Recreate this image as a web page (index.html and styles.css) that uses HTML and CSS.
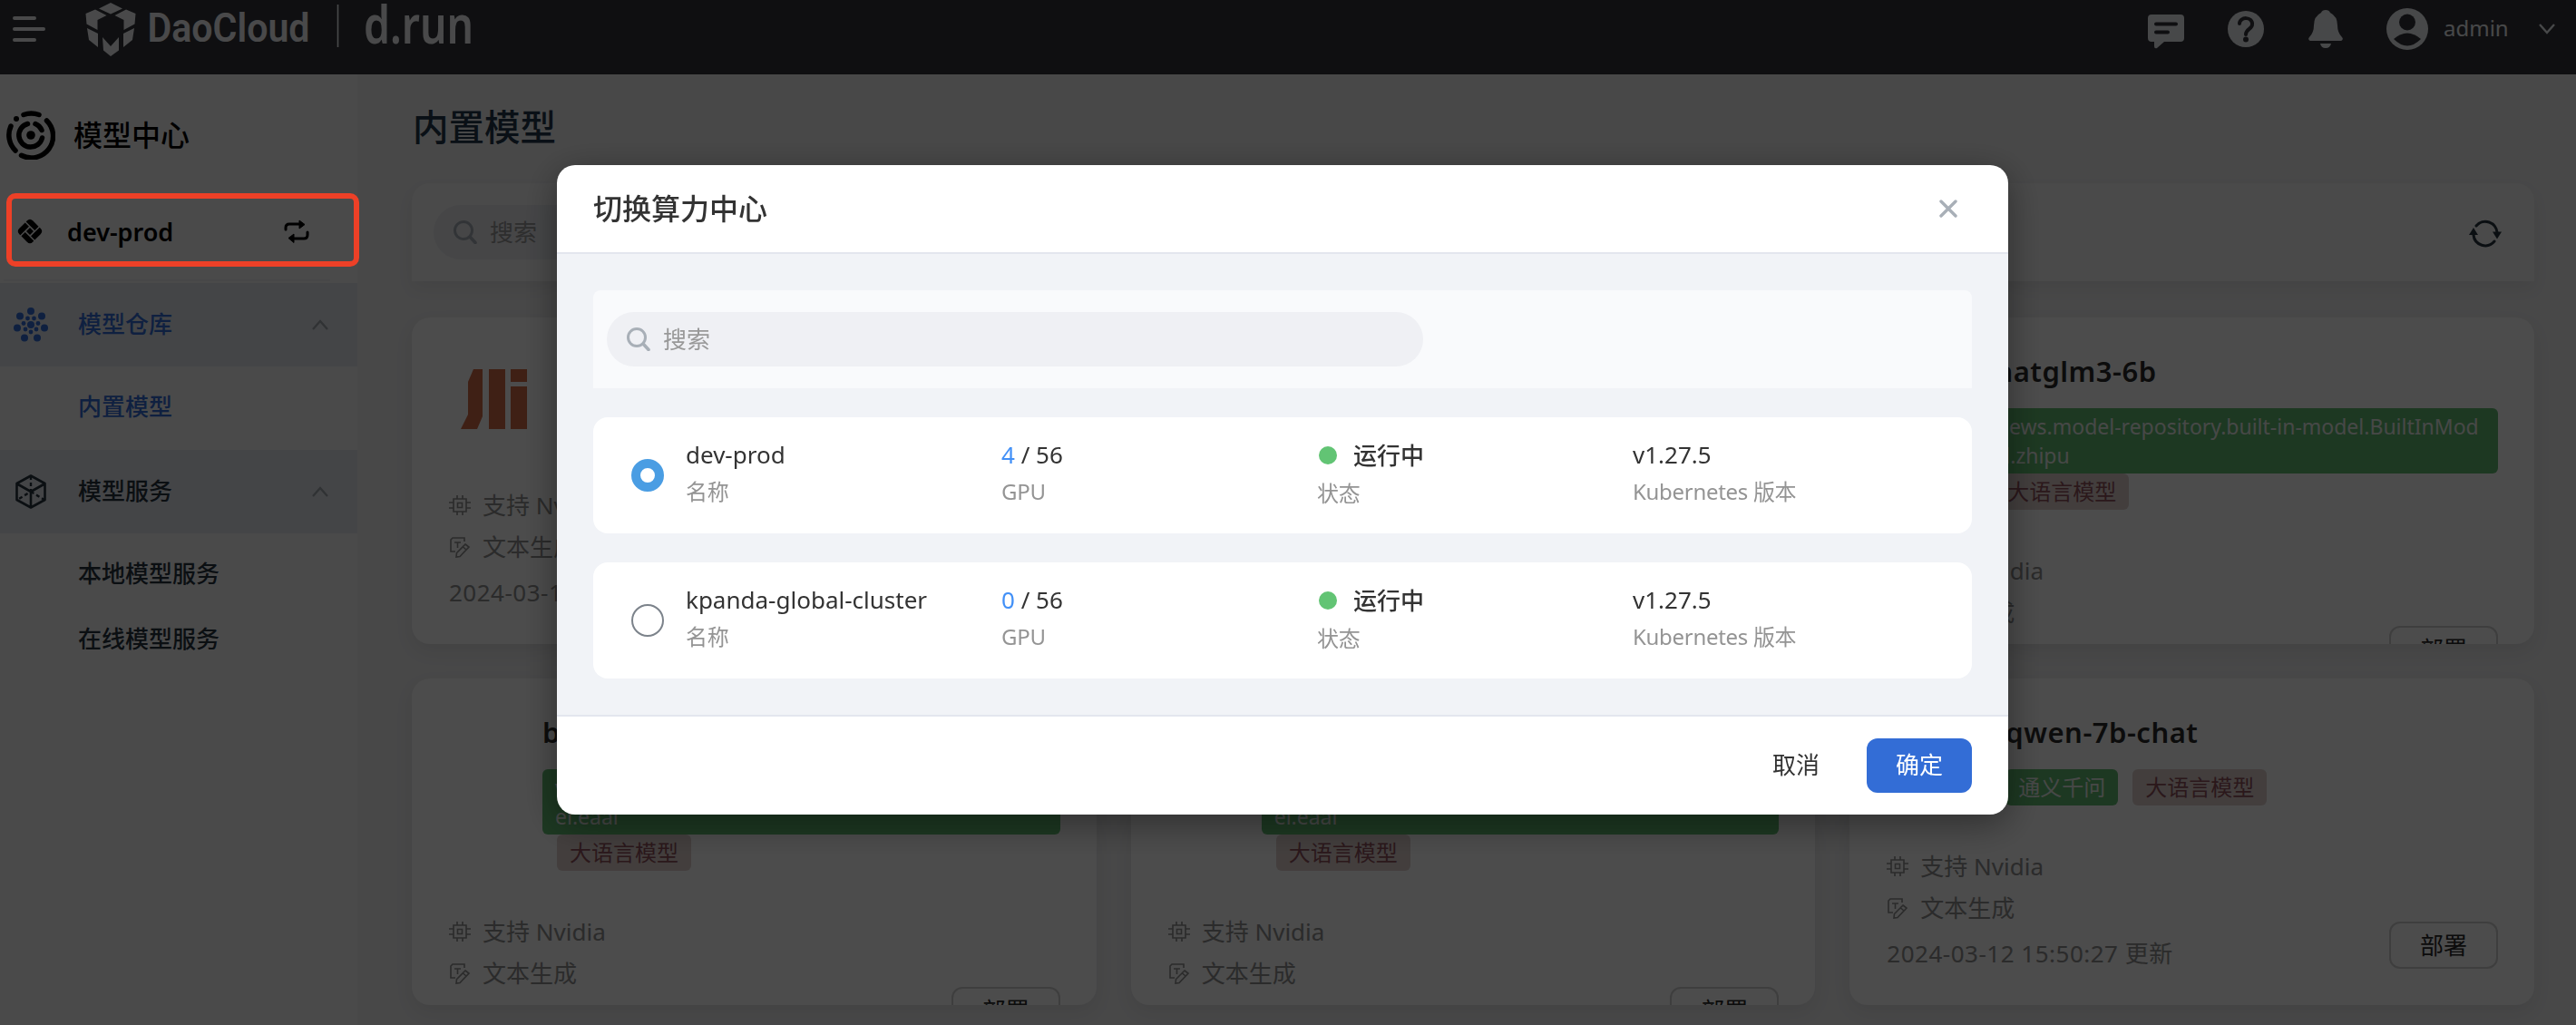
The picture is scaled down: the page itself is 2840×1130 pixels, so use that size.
FILE: index.html
```
<!DOCTYPE html>
<html lang="zh-CN">
<head>
<meta charset="utf-8">
<title>内置模型</title>
<link rel="stylesheet" href="styles.css">
</head>
<body>
<svg width="0" height="0" class="defs" aria-hidden="true">
  <defs>
    <symbol id="i-search" viewBox="0 0 26 26"><circle cx="11" cy="11" r="9.500" fill="none" stroke="currentColor" stroke-width="3"/><path d="M18 18l6 6.500" stroke="currentColor" stroke-width="3.600" stroke-linecap="round"/></symbol>
    <symbol id="i-up" viewBox="0 0 20 12"><path d="M2 11L10 2l8 9" fill="none" stroke="currentColor" stroke-width="2.400"/></symbol>
    <symbol id="i-chip" viewBox="0 0 24 24"><path d="M5 5h14v14H5zM9.500 9.500h5v5h-5zM9 1v4M15 1v4M9 19v4M15 19v4M0 9h5M0 15h5M19 9h5M19 15h5" fill="none" stroke="currentColor" stroke-width="1.600"/></symbol>
    <symbol id="i-text" viewBox="0 0 24 24"><path d="M17 6V2H4L2 4v13h5M6 7h7M9.500 7v6" fill="none" stroke="currentColor" stroke-width="1.600"/><path d="M18 9l4 3-10 10.500-4 .5.500-4.500zM15.500 12l3.500 3" fill="none" stroke="currentColor" stroke-width="1.600"/></symbol>
  </defs>
</svg>

<header class="topbar">
  <svg class="burger" viewBox="0 0 36 28"><path d="M2 2h22M2 14h32M2 26h22" stroke="currentColor" stroke-width="4" stroke-linecap="round"/></svg>
  <svg class="brand" viewBox="0 0 430 64">
    <g fill="currentColor">
      <path d="M36 3L49 9.500 36 15.500 23 9.500z"/>
      <path d="M19 10.500L31.500 17 21.500 22v11L9.500 26.500 8.500 15z"/>
      <path d="M53 10.500L40.500 17 50.500 22v11L62.500 26.500 63.500 15z"/>
      <path d="M10 31l12 6v15L12 44z"/>
      <path d="M62 31l-12 6v15l10-8z"/>
      <path d="M27 41l9 10 9-10v14.500l-9 6.500-8-6.500z"/>
    </g>
    <text class="brand-name" x="76.500" y="45.500" textLength="179" lengthAdjust="spacingAndGlyphs">DaoCloud</text>
    <path d="M286.500 5v47" stroke="currentColor" stroke-width="1.600"/>
    <text class="brand-product" x="315" y="48" textLength="121" lengthAdjust="spacingAndGlyphs">d.run</text>
  </svg>
  <div class="tools">
    <svg class="t-msg" viewBox="0 0 40 38"><path d="M4 0h32a4 4 0 0 1 4 4v22a4 4 0 0 1-4 4H18l-8 7q-3 1-3-2v-5H4a4 4 0 0 1-4-4V4a4 4 0 0 1 4-4z" fill="currentColor"/><path class="cut" d="M9 10.500h22M9 19.500h13"/></svg>
    <svg class="t-help" viewBox="0 0 40 40"><circle cx="20" cy="20" r="20" fill="currentColor"/><path class="cut" d="M13 14c0-8 15-8 14 1 0 5-7 5-7 11"/><circle class="cut-fill" cx="20" cy="31.500" r="3"/></svg>
    <svg class="t-bell" viewBox="0 0 38 42"><path d="M19 0q4 0 5 3 8 4 8 14 0 8 5 13c2 2 0 4-1 4H2c-1 0-3-2-1-4q5-5 5-13Q6 7 14 3q1-3 5-3zM13 37h12q-1 5-6 5t-6-5z" fill="currentColor"/></svg>
    <svg class="t-user" viewBox="0 0 46 46"><circle cx="23" cy="23" r="23" fill="currentColor"/><circle class="cut-fill" cx="23" cy="15.500" r="9"/><path class="cut-fill" d="M8 34q15-13 30 0-15 15-30 0z"/></svg>
    <span class="user">admin</span>
    <svg class="t-down" viewBox="0 0 20 12"><path d="M2 1l8 9 8-9" fill="none" stroke="currentColor" stroke-width="2.400"/></svg>
  </div>
</header>

<div class="layout">
  <aside class="sidebar">
    <div class="product">
      <svg viewBox="0 0 54 54"><g fill="none" stroke="currentColor" stroke-width="5.500" stroke-linecap="round"><path d="M19 4.500a24 24 0 0 1 17 0M44.500 11a24 24 0 0 1-28 38.300M10 44a24 24 0 0 1-5-27"/><path d="M23.500 14.500a13 13 0 1 0 16 15.500M32 14.500a13 13 0 0 1 7 7"/></g><circle cx="27" cy="27" r="4.800" fill="currentColor"/><circle cx="11" cy="9" r="3" fill="currentColor"/></svg>
      <span>模型中心</span>
    </div>
    <div class="cluster">
      <svg class="cluster-icon" viewBox="0 0 28 28"><g fill="currentColor" transform="rotate(-45 14 14)"><path d="M8 3.500h9v6H3.500V8q0-4.500 4.500-4.500zM18.500 3.500H20q4.500 0 4.500 4.500v9h-6zM24.500 18.500V20q0 4.500-4.500 4.500h-9v-6zM3.500 11h6v13.500H8q-4.500 0-4.500-4.500z"/><path d="M11.200 11.200h5.600v5.600h-5.600z"/></g></svg>
      <span class="cluster-name">dev-prod</span>
      <svg class="cluster-swap" viewBox="0 0 28 26"><path d="M2 11V9q0-4 4-4h13M26 14v3q0 4-4 4H9" fill="none" stroke="currentColor" stroke-width="3" stroke-linecap="round"/><path d="M17 1l6 4.500-6 4.500zM11 16l-6 4.500 6 5z" fill="currentColor" stroke="currentColor" stroke-linejoin="round"/></svg>
    </div>
    <nav>
      <div class="group active">
        <svg class="group-icon" viewBox="0 0 38 38"><g fill="currentColor"><circle cx="19" cy="19" r="4"/><circle cx="19" cy="4" r="4"/><circle cx="31" cy="9.500" r="4"/><circle cx="34" cy="22.500" r="4"/><circle cx="26" cy="33.500" r="4"/><circle cx="12" cy="33.500" r="4"/><circle cx="4" cy="22.500" r="4"/><circle cx="7" cy="9.500" r="4"/><circle cx="15.500" cy="12" r="2.400"/><circle cx="22.500" cy="12" r="2.400"/><circle cx="27" cy="17.500" r="2.400"/><circle cx="25" cy="24" r="2.400"/><circle cx="19" cy="27" r="2.400"/><circle cx="13" cy="24" r="2.400"/><circle cx="11" cy="17.500" r="2.400"/></g></svg>
        <span>模型仓库</span><svg class="caret"><use href="#i-up"/></svg>
      </div>
      <a class="item first active">内置模型</a>
      <div class="group">
        <svg class="group-icon" viewBox="0 0 38 38"><path d="M19 1.500L34.500 10v18L19 36.500 3.500 28V10zM4 10.500L19 19l15-8.500M19 19v17" fill="none" stroke="currentColor" stroke-width="2.600" stroke-linejoin="round"/><path d="M19 2v17L4 28M19 19l15 9" fill="none" stroke="currentColor" stroke-width="2.400" stroke-dasharray="4 3"/></svg>
        <span>模型服务</span><svg class="caret"><use href="#i-up"/></svg>
      </div>
      <a class="item local">本地模型服务</a>
      <a class="item">在线模型服务</a>
    </nav>
  </aside>

  <main class="main">
    <h1>内置模型</h1>
    <div class="toolbar">
      <div class="search page-search"><svg><use href="#i-search"/></svg><span>搜索</span></div>
      <svg class="refresh" viewBox="0 0 36 32"><path d="M8 8a13 13 0 0 1 23 8M28 25a13 13 0 0 1-23-7" fill="none" stroke="currentColor" stroke-width="3" stroke-linecap="round"/><path d="M26 14.500h10l-5 8zM0 18h10L5 10z" fill="currentColor"/></svg>
    </div>
    <div class="cards">
      <section class="card">
        <div class="card-head inset">
          <svg class="vendor" viewBox="0 0 74 66"><path fill="currentColor" d="M14 0h10v52l-6 14H0l8-16V14zM31 0h18v66H31zM55 0h18v14H55zM55 19h18v47H55z"/></svg>
          <div class="info"><h2>baichuan2-7b</h2><div class="tags"><span class="tag green">百川智能</span></div></div>
        </div>
        <div class="card-foot"><div class="meta"><p><svg><use href="#i-chip"/></svg><span>支持 Nvidia</span></p><p><svg><use href="#i-text"/></svg><span>文本生成</span></p><time>2024-03-12 15:50:27 更新</time></div><button>部署</button></div>
      </section>
      <section class="card">
        <div class="card-head"><div class="vendor"></div><div class="info"><h2>bge-base-zh</h2><div class="tags"><span class="tag green">智源</span></div></div></div>
        <div class="card-foot"><div class="meta"><p><svg><use href="#i-chip"/></svg><span>支持 Nvidia</span></p><p><svg><use href="#i-text"/></svg><span>文本生成</span></p><time>2024-03-12 15:50:27 更新</time></div><button>部署</button></div>
      </section>
      <section class="card">
        <div class="card-head"><div class="vendor"></div><div class="info"><h2>chatglm3-6b</h2><div class="tags"><span class="tag green wide">views.model-repository.built-in-model.BuiltInMod<br>el.zhipu</span><span class="tag brown">大语言模型</span></div></div></div>
        <div class="card-foot"><div class="meta"><p><svg><use href="#i-chip"/></svg><span>支持 Nvidia</span></p><p><svg><use href="#i-text"/></svg><span>文本生成</span></p><time>2024-03-12 15:50:27 更新</time></div><button>部署</button></div>
      </section>
      <section class="card">
        <div class="card-head"><div class="vendor"></div><div class="info"><h2>bge-large-zh</h2><div class="tags"><span class="tag green wide">views.model-repository.built-in-model.BuiltInMod<br>el.eaai</span><span class="tag brown">大语言模型</span></div></div></div>
        <div class="card-foot"><div class="meta"><p><svg><use href="#i-chip"/></svg><span>支持 Nvidia</span></p><p><svg><use href="#i-text"/></svg><span>文本生成</span></p><time>2024-03-12 15:50:27 更新</time></div><button>部署</button></div>
      </section>
      <section class="card">
        <div class="card-head"><div class="vendor"></div><div class="info"><h2>bge-m3</h2><div class="tags"><span class="tag green wide">views.model-repository.built-in-model.BuiltInMod<br>el.eaai</span><span class="tag brown">大语言模型</span></div></div></div>
        <div class="card-foot"><div class="meta"><p><svg><use href="#i-chip"/></svg><span>支持 Nvidia</span></p><p><svg><use href="#i-text"/></svg><span>文本生成</span></p><time>2024-03-12 15:50:27 更新</time></div><button>部署</button></div>
      </section>
      <section class="card">
        <div class="card-head inset"><div class="vendor"></div><div class="info"><h2>qwen-7b-chat</h2><div class="tags"><span class="tag green">通义千问</span><span class="tag brown">大语言模型</span></div></div></div>
        <div class="card-foot"><div class="meta"><p><svg><use href="#i-chip"/></svg><span>支持 Nvidia</span></p><p><svg><use href="#i-text"/></svg><span>文本生成</span></p><time>2024-03-12 15:50:27 更新</time></div><button>部署</button></div>
      </section>
    </div>
  </main>
</div>

<div class="mask">
  <div class="modal">
    <div class="modal-head">
      <h3>切换算力中心</h3>
      <svg class="close" viewBox="0 0 20 20"><path d="M2 2l16 16M18 2L2 18" stroke="currentColor" stroke-width="3.400" stroke-linecap="round"/></svg>
    </div>
    <div class="modal-body">
      <div class="modal-tools"><div class="search"><svg><use href="#i-search"/></svg><span>搜索</span></div></div>
      <div class="option">
        <i class="radio on"></i>
        <div class="cell"><b>dev-prod</b><small>名称</small></div>
        <div class="cell"><b><em>4</em> / 56</b><small>GPU</small></div>
        <div class="cell status"><b><i class="dot"></i>运行中</b><small>状态</small></div>
        <div class="cell"><b>v1.27.5</b><small>Kubernetes 版本</small></div>
      </div>
      <div class="option">
        <i class="radio"></i>
        <div class="cell"><b>kpanda-global-cluster</b><small>名称</small></div>
        <div class="cell"><b><em>0</em> / 56</b><small>GPU</small></div>
        <div class="cell status"><b><i class="dot"></i>运行中</b><small>状态</small></div>
        <div class="cell"><b>v1.27.5</b><small>Kubernetes 版本</small></div>
      </div>
    </div>
    <div class="modal-foot"><button class="cancel">取消</button><button class="ok">确定</button></div>
  </div>
</div>
<div class="highlight"></div>
</body>
</html>
```
FILE: styles.css
```
* { box-sizing: border-box; }
body {
  margin: 0;
  width: 2840px;
  height: 1130px;
  overflow: hidden;
  background: #f0f0f1;
  font-family: "Noto Sans", "Noto Sans CJK SC", sans-serif;
  font-size: 26px;
  color: #333;
}
h1, h2, h3, p { margin: 0; }
button { font: inherit; }
svg { display: block; flex: none; }
.defs { position: absolute; }

.topbar {
  display: flex;
  height: 82px;
  padding-left: 14px;
  background: #32353b;
  color: #f5f6f8;
}
.burger { width: 36px; height: 28px; margin-top: 18px; }
.brand { width: 440px; height: 64px; margin-left: 36px; overflow: visible; }
.brand { width: 430px; }
.brand text { fill: currentColor; }
.brand-name { font: 600 45px Roboto, sans-serif; }
.brand-product { font: 600 58px "Noto Sans", sans-serif; }
.tools {
  display: flex;
  align-items: center;
  height: 64px;
  margin-left: auto;
  padding-right: 22px;
  color: #eff1f4;
}
.t-msg { width: 40px; height: 38px; margin-top: 5px; }
.t-help { width: 40px; height: 40px; margin-left: 48px; }
.t-bell { width: 38px; height: 42px; margin-left: 49px; }
.t-user { width: 46px; height: 46px; margin-left: 48px; }
.user { width: 72px; margin-left: 17px; font-size: 24px; line-height: 62px; height: 64px; }
.t-down { width: 20px; height: 12px; margin-left: 32px; }
.cut { fill: none; stroke: #32353b; stroke-width: 4; stroke-linecap: round; }
.cut-fill { fill: #32353b; }

.layout { display: flex; height: 1048px; }
.sidebar { width: 394px; flex: none; background: #f7f7f8; color: #27333f; }
.product {
  display: flex;
  align-items: center;
  height: 134px;
  padding-left: 7px;
  gap: 20px;
  font-size: 32px;
  font-weight: 500;
  color: #000;
}
.product svg { width: 54px; height: 54px; }
.product span { padding-bottom: 4px; }
.cluster {
  display: flex;
  align-items: center;
  height: 94px;
  margin: 0 30px 2px 4px;
  padding: 0 23px 14px 15px;
  border-bottom: 2px solid #eeeff1;
  color: #000;
}
.cluster-icon { width: 28px; height: 28px; }
.cluster-name { margin-left: 27px; font-size: 27px; font-weight: 600; }
.cluster-swap { width: 28px; height: 26px; margin-left: auto; }
.group {
  display: flex;
  align-items: center;
  height: 92px;
  padding: 0 31px 0 15px;
  background: #e4e8ef;
  font-weight: 500;
}
.group span { padding-bottom: 4px; }
.group-icon { width: 38px; height: 38px; margin-right: 33px; }
.caret { width: 20px; height: 12px; margin-left: auto; color: #a2a7ad; }
.item { display: block; height: 72px; padding-left: 86px; font-weight: 500; line-height: 71px; }
.item.first { height: 92px; line-height: 89px; }
.item.local { margin-top: 9px; }
.active { color: #336dd6; }
.active .caret { color: #a2a7ad; }

.main { flex: 1; padding: 26px 46px 22px 60px; }
h1 { height: 94px; padding-left: 1px; font-size: 39.5px; font-weight: 500; line-height: 65px; color: #22364a; }
.toolbar {
  display: flex;
  align-items: center;
  height: 108px;
  padding: 0 36px 6px 24px;
  border-radius: 20px 20px 0 0;
  background: #f8f8f8;
  box-shadow: 0 8px 18px rgba(0, 0, 0, .06);
}
.search {
  display: flex;
  align-items: center;
  width: 900px;
  height: 60px;
  padding-left: 22px;
  gap: 14px;
  border-radius: 30px;
  background: #eff0f4;
  color: #999;
}
.search span { padding-bottom: 3px; }
.search svg { width: 26px; height: 26px; color: #a8afb7; }
.page-search { background: #e9ebef; margin-top: 6px; }
.refresh { width: 36px; height: 32px; margin: 8px 0 0 auto; color: #27333f; }
.cards {
  display: grid;
  grid-template-columns: repeat(3, 1fr);
  gap: 38px;
  margin-top: 40px;
}
.card {
  display: flex;
  flex-direction: column;
  height: 360px;
  overflow: hidden;
  padding: 36px 40px 0 41px;
  border-radius: 20px;
  background: #fdfdfd;
  box-shadow: 0 8px 20px rgba(0, 0, 0, .07);
}
.card-head { display: flex; flex: none; min-height: 148px; padding-bottom: 44px; }
.vendor { width: 74px; height: 66px; margin: 21px 16px 0 13px; color: #d26b46; }
.inset .vendor { margin-right: 44px; }
.info { flex: 1; }
h2 { height: 64px; font-size: 31px; font-weight: 600; line-height: 46px; letter-spacing: .5px; color: #2b2b2b; white-space: nowrap; }
.tags { display: flex; flex-wrap: wrap; }
.tag { padding: 4px 14px; border-radius: 6px; font-size: 24px; line-height: 31px; height: 40px; }
.tag + .tag { margin-left: 16px; }
.green { background: #62bd72; color: #eef2ef; }
.wide { width: 100%; height: 72px; font-size: 23px; line-height: 32px; white-space: nowrap; }
.brown { background: #dfd1ce; color: #8f505b; }
.card-foot { display: flex; flex: none; justify-content: space-between; align-items: flex-end; }
.meta { color: #8f8f8f; }
.meta p { display: flex; align-items: center; height: 46px; gap: 13px; }
.meta p span { padding-bottom: 3px; }
.meta svg { width: 24px; height: 24px; }
time { display: block; margin-top: 6px; line-height: 43px; height: 44px; letter-spacing: .5px; }
.card-foot button {
  width: 120px;
  height: 52px;
  margin-bottom: 6px;
  padding: 0;
  border: 2px solid #cfcfcf;
  border-radius: 12px;
  background: none;
  line-height: 42px;
  color: #2b2b2b;
}

.mask { position: fixed; inset: 0; padding: 182px 0 0 614px; background: rgba(0, 0, 0, .7); }
.modal {
  width: 1600px;
  height: 716px;
  overflow: hidden;
  border-radius: 20px;
  background: #fff;
  box-shadow: 0 10px 40px rgba(0, 0, 0, .4);
}
.modal-head {
  display: flex;
  align-items: center;
  justify-content: space-between;
  height: 98px;
  padding: 0 56px 5px 40px;
  border-bottom: 2px solid #e3e6ee;
}
h3 { font-size: 32px; font-weight: 500; }
.close { width: 20px; height: 20px; margin-top: 4px; color: #a8afb7; }
.modal-body { display: flex; flex-direction: column; height: 510px; padding: 40px; gap: 32px; border-bottom: 2px solid #e3e6ee; background: #f1f3f7; }
.modal-tools { display: flex; align-items: center; height: 108px; padding-left: 15px; border-radius: 8px 8px 0 0; background: #f9fafc; }
.option {
  display: grid;
  grid-template-columns: 60px repeat(4, 348px);
  height: 128px;
  padding-left: 42px;
  border-radius: 16px;
  background: #fff;
}
.radio { align-self: center; width: 36px; height: 36px; border: 2px solid #7c838b; border-radius: 50%; }
.radio.on { border: 10px solid #4a9de3; }
.cell { padding-top: 21px; }
.cell b { display: flex; align-items: center; height: 40px; font-weight: 400; white-space: pre; }
.cell em { font-style: normal; color: #4290f7; }
.cell small { display: block; height: 40px; font-size: 24px; line-height: 41px; letter-spacing: -.3px; color: #949494; }
.status b { font-weight: 500; }
.status small { padding-top: 2px; }
.dot { width: 20px; height: 20px; margin: 2px 18px 0 2px; border-radius: 50%; background: #62c474; }
.modal-foot { display: flex; justify-content: flex-end; align-items: center; height: 108px; padding-right: 40px; gap: 20px; }
.modal-foot button { width: 116px; height: 60px; padding: 0 0 5px; border: 0; border-radius: 12px; background: none; color: #333; }
.modal-foot .ok { background: #336dd6; color: #fff; }

.highlight { position: fixed; left: 7px; top: 213px; width: 389px; height: 81px; border: 6px solid #ed4027; border-radius: 10px; }
```
